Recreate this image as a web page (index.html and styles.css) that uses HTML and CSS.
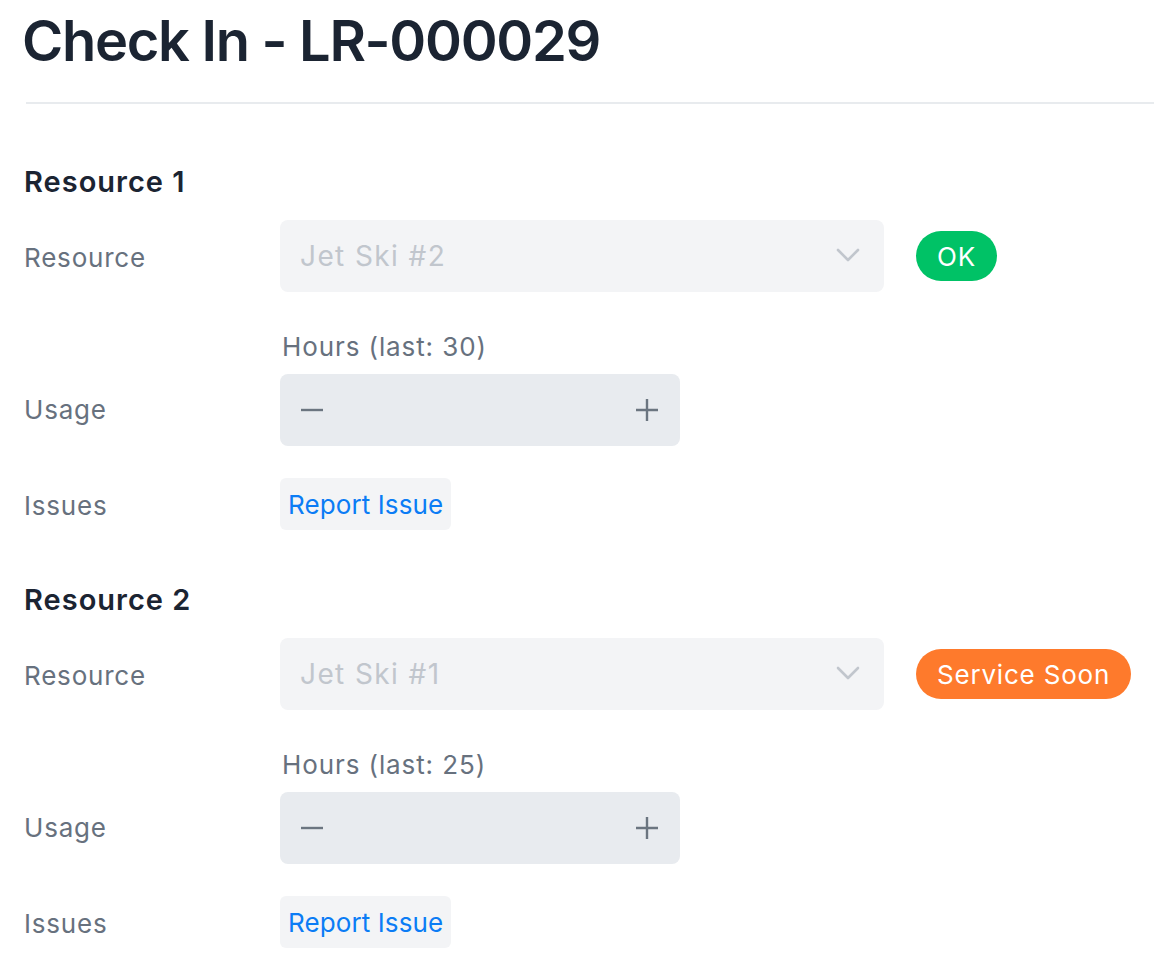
FILE: index.html
```html
<!DOCTYPE html>
<html lang="en">
<head>
  <meta charset="UTF-8">
  <meta name="viewport" content="width=device-width, initial-scale=1.0">
  <title>Check In - LR-000029</title>
  <link rel="stylesheet" href="styles.css">
</head>
<body>

  <header class="page-header">
    <h1>Check In - LR-000029</h1>
  </header>

  <section class="resource">
    <h2>Resource 1</h2>
    <div class="row">
      <div class="label">Resource</div>
      <div class="select">
        <span>Jet Ski #2</span>
        <svg class="chevron" width="24" height="24" viewBox="0 0 24 24" fill="none" stroke="currentColor" stroke-width="2.6" stroke-linecap="round" stroke-linejoin="round"><path d="M2 6l10 10 10-10"/></svg>
      </div>
      <span class="badge badge-ok">OK</span>
    </div>
    <div class="row row-usage">
      <div class="label">Usage</div>
      <div class="field">
        <div class="field-label">Hours (last: 30)</div>
        <div class="stepper">
          <svg width="24" height="24" viewBox="0 0 24 24" fill="none" stroke="currentColor" stroke-width="2.4"><path d="M1 12h22"/></svg>
          <svg width="24" height="24" viewBox="0 0 24 24" fill="none" stroke="currentColor" stroke-width="2.4"><path d="M1 12h22M12 1v22"/></svg>
        </div>
      </div>
    </div>
    <div class="row row-issues">
      <div class="label">Issues</div>
      <button class="report-btn">Report Issue</button>
    </div>
  </section>

  <section class="resource">
    <h2>Resource 2</h2>
    <div class="row">
      <div class="label">Resource</div>
      <div class="select">
        <span>Jet Ski #1</span>
        <svg class="chevron" width="24" height="24" viewBox="0 0 24 24" fill="none" stroke="currentColor" stroke-width="2.6" stroke-linecap="round" stroke-linejoin="round"><path d="M2 6l10 10 10-10"/></svg>
      </div>
      <span class="badge badge-service">Service Soon</span>
    </div>
    <div class="row row-usage">
      <div class="label">Usage</div>
      <div class="field">
        <div class="field-label">Hours (last: 25)</div>
        <div class="stepper">
          <svg width="24" height="24" viewBox="0 0 24 24" fill="none" stroke="currentColor" stroke-width="2.4"><path d="M1 12h22"/></svg>
          <svg width="24" height="24" viewBox="0 0 24 24" fill="none" stroke="currentColor" stroke-width="2.4"><path d="M1 12h22M12 1v22"/></svg>
        </div>
      </div>
    </div>
    <div class="row row-issues">
      <div class="label">Issues</div>
      <button class="report-btn">Report Issue</button>
    </div>
  </section>

</body>
</html>
```

FILE: styles.css
```css
* {
  font-family: Inter, "Noto Sans", sans-serif;
  margin: 0;
  padding: 0;
  box-sizing: border-box;
}

body {
  background-color: #ffffff;
  color: #1b2432;
  padding: 0 0 0 24px;
}

.page-header {
  padding-top: 8px;
  height: 104px;
  border-bottom: 2px solid #e8ebee;
  margin-left: 2px;
}

h1 {
  font-size: 56px;
  font-weight: 600;
  line-height: 66px;
  letter-spacing: -1.3px;
  margin-left: -4px;
}

.resource h2 {
  font-size: 29px;
  font-weight: 600;
  line-height: 36px;
  letter-spacing: 1px;
  margin-bottom: 20px;
}

.resource {
  padding-top: 60px;
}

.resource + .resource {
  padding-top: 52px;
}

.row {
  display: flex;
  align-items: center;
}

.label {
  width: 256px;
  flex-shrink: 0;
  font-size: 26px;
  letter-spacing: 0.8px;
  color: #67717e;
  padding-top: 3px;
}

.select {
  width: 604px;
  height: 72px;
  background: #f3f4f6;
  border-radius: 8px;
  display: flex;
  align-items: center;
  justify-content: space-between;
  padding: 0 24px 0 20px;
  font-size: 28px;
  letter-spacing: 1.4px;
  color: #c1c6cd;
}

.chevron {
  color: #c1c6cd;
}

.badge {
  margin-left: 32px;
  height: 50px;
  border-radius: 25px;
  padding: 0 21px;
  display: inline-flex;
  align-items: center;
  font-size: 26px;
  letter-spacing: 0.8px;
  color: #ffffff;
}

.badge-ok {
  background: #00c266;
}

.badge-service {
  background: #fe7a2c;
}

.row-usage {
  align-items: flex-end;
  margin-top: 39px;
}

.row-usage .label {
  line-height: 72px;
  padding-top: 6px;
}

.field-label {
  font-size: 26px;
  letter-spacing: 0.9px;
  line-height: 32px;
  color: #67717e;
  margin-left: 2px;
  margin-bottom: 11px;
}

.stepper {
  width: 400px;
  height: 72px;
  background: #e8ebef;
  border-radius: 8px;
  display: flex;
  align-items: center;
  justify-content: space-between;
  padding: 0 21px 0 20px;
  color: #6b7580;
}

.row-issues {
  margin-top: 32px;
}

.report-btn {
  height: 52px;
  padding: 0 8px;
  border: none;
  border-radius: 6px;
  background: #f3f4f6;
  color: #0b7cf5;
  font-size: 26px;
  letter-spacing: 0.1px;
  cursor: pointer;
}
```
